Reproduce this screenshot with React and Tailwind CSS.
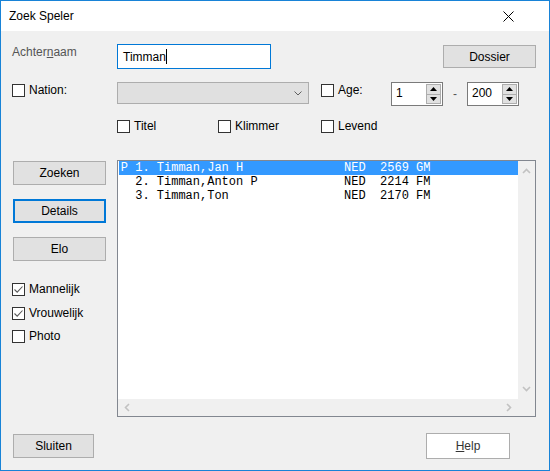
const players = [
  { mark: "P", nr: "1.", name: "Timman,Jan H", fed: "NED", elo: "2569", title: "GM", selected: true },
  { mark: " ", nr: "2.", name: "Timman,Anton P", fed: "NED", elo: "2214", title: "FM" },
  { mark: " ", nr: "3.", name: "Timman,Ton", fed: "NED", elo: "2170", title: "FM" },
];

function Box({ checked }) {
  return (
    <span className="w-[13px] h-[13px] border border-[#333333] bg-white flex items-center justify-center shrink-0">
      {checked && (
        <svg width="11" height="11" viewBox="0 0 11 11">
          <path d="M1.5 5.5 L4.2 8.2 L9.5 2.5" stroke="#5a5a5a" fill="none" strokeWidth="1.1" />
        </svg>
      )}
    </span>
  );
}

function Check({ label, checked, className = "" }) {
  return (
    <div className={"flex items-center h-[13px] " + className}>
      <Box checked={checked} />
      <span className="ml-[4px] leading-[13px]">{label}</span>
    </div>
  );
}

function Btn({ children, focused, className = "" }) {
  return (
    <div
      className={
        (focused ? "border-2 border-[#0078d7] " : "border border-[#adadad] ") +
        "bg-[#e1e1e1] flex items-center justify-center " +
        className
      }
    >
      {children}
    </div>
  );
}

function Spin({ value }) {
  return (
    <div className="w-[52px] h-[24px] border border-[#7a7a7a] bg-white flex">
      <div className="flex-1 pl-[4px] pt-[3px] leading-[14px]">{value}</div>
      <div className="w-[16px] flex flex-col p-[1px] pl-0">
        <div className="flex-1 border border-[#adadad] bg-[#e1e1e1] flex items-center justify-center">
          <svg width="7" height="4" viewBox="0 0 7 4">
            <path d="M0 4 L3.5 0 L7 4 Z" fill="#000" />
          </svg>
        </div>
        <div className="flex-1 border border-t-0 border-[#adadad] bg-[#e1e1e1] flex items-center justify-center">
          <svg width="7" height="4" viewBox="0 0 7 4">
            <path d="M0 0 L3.5 4 L7 0 Z" fill="#000" />
          </svg>
        </div>
      </div>
    </div>
  );
}

function Chevron({ d }) {
  return (
    <svg width="9" height="9" viewBox="0 0 9 9">
      <path d={d} stroke="#c2c2c2" strokeWidth="1.6" fill="none" />
    </svg>
  );
}

export default function App() {
  return (
    <div className="w-[550px] h-[471px] border border-[#1883d7] bg-[#f0f0f0] flex flex-col font-['Liberation_Sans',Arial,sans-serif] text-[12px] text-black">
      {/* title bar */}
      <div className="h-[30px] bg-white flex items-center justify-between pl-[8px] pr-[35px]">
        <span className="text-[12px]">Zoek Speler</span>
        <svg width="11" height="11" viewBox="0 0 11 11">
          <path d="M0.5 0.5 L10.5 10.5 M10.5 0.5 L0.5 10.5" stroke="#000" strokeWidth="1" />
        </svg>
      </div>

      <div className="flex-1 flex flex-col pl-[11px] pr-[13px]">
        {/* achternaam */}
        <div className="flex mt-[13px] h-[25px]">
          <div className="w-[105px] text-[#555555] leading-[14px] mt-[1px]">
            Achter<span className="underline">n</span>aam
          </div>
          <div className="w-[154px] h-[25px] border border-[#0078d7] bg-white flex items-center pl-[5px]">
            <span className="leading-[14px]">Timman</span>
            <span className="w-px h-[15px] bg-black" />
          </div>
          <Btn className="ml-auto mt-[1px] w-[93px] h-[23px]">Dossier</Btn>
        </div>

        {/* nation / age */}
        <div className="flex mt-[13px] h-[25px]">
          <Check label="Nation:" className="w-[105px] mt-[2px] self-start" />
          <div className="w-[192px] h-[22px] border border-[#adadad] bg-[#e0e0e0] flex items-center justify-end pr-[6px]">
            <svg width="8" height="5" viewBox="0 0 8 5">
              <path d="M0.5 0.5 L4 4 L7.5 0.5" stroke="#606060" fill="none" strokeWidth="1" />
            </svg>
          </div>
          <Check label="Age:" className="ml-[12px] w-[70px] mt-[2px] self-start" />
          <Spin value="1" />
          <div className="w-[24px] text-center leading-[14px] pt-[5px] text-[#555555]">-</div>
          <Spin value="200" />
        </div>

        {/* titel / klimmer / levend */}
        <div className="flex mt-[13px] pl-[105px]">
          <Check label="Titel" className="w-[101px]" />
          <Check label="Klimmer" className="w-[103px]" />
          <Check label="Levend" />
        </div>

        {/* main */}
        <div className="flex mt-[27px]">
          <div className="w-[105px] flex flex-col">
            <Btn className="ml-[1px] mt-[1px] w-[93px] h-[24px]">Zoeken</Btn>
            <Btn focused className="ml-[1px] mt-[14px] w-[93px] h-[24px]">Details</Btn>
            <Btn className="ml-[1px] mt-[14px] w-[93px] h-[24px]">Elo</Btn>
            <Check label="Mannelijk" checked className="mt-[22px]" />
            <Check label="Vrouwelijk" checked className="mt-[11px]" />
            <Check label="Photo" className="mt-[10px]" />
          </div>

          <div className="w-[420px] h-[257px] border border-[#828790] bg-white flex flex-col">
            <div className="flex flex-1 min-h-0">
              <div className="flex-1 pl-[1px] font-['Liberation_Mono','Courier_New',monospace] text-[12px]">
                {players.map((p) => (
                  <div
                    key={p.nr}
                    className={
                      "h-[14px] leading-[15px] pl-[2px] whitespace-pre " +
                      (p.selected ? "bg-[#3399ff] text-white" : "text-black")
                    }
                  >
                    {(p.mark + " " + p.nr + " " + p.name).padEnd(31) + p.fed + "  " + p.elo + " " + p.title}
                  </div>
                ))}
              </div>
              <div className="w-[17px] bg-[#f0f0f0] flex flex-col items-center justify-between py-[6px]">
                <Chevron d="M1 6 L4.5 2.5 L8 6" />
                <Chevron d="M1 3 L4.5 6.5 L8 3" />
              </div>
            </div>
            <div className="h-[17px] flex">
              <div className="flex-1 bg-[#f0f0f0] flex items-center justify-between px-[5px]">
                <Chevron d="M6 1 L2.5 4.5 L6 8" />
                <Chevron d="M3 1 L6.5 4.5 L3 8" />
              </div>
              <div className="w-[17px] bg-[#f0f0f0]" />
            </div>
          </div>
        </div>

        {/* bottom */}
        <div className="flex mt-[16px]">
          <Btn className="ml-[1px] mt-[1px] w-[81px] h-[24px]">Sluiten</Btn>
          <div className="ml-auto mr-[26px] w-[84px] h-[26px] border border-[#adadad] bg-white flex items-center justify-center text-[#333333]">
            <span>
              <span className="underline">H</span>elp
            </span>
          </div>
        </div>
      </div>
    </div>
  );
}
